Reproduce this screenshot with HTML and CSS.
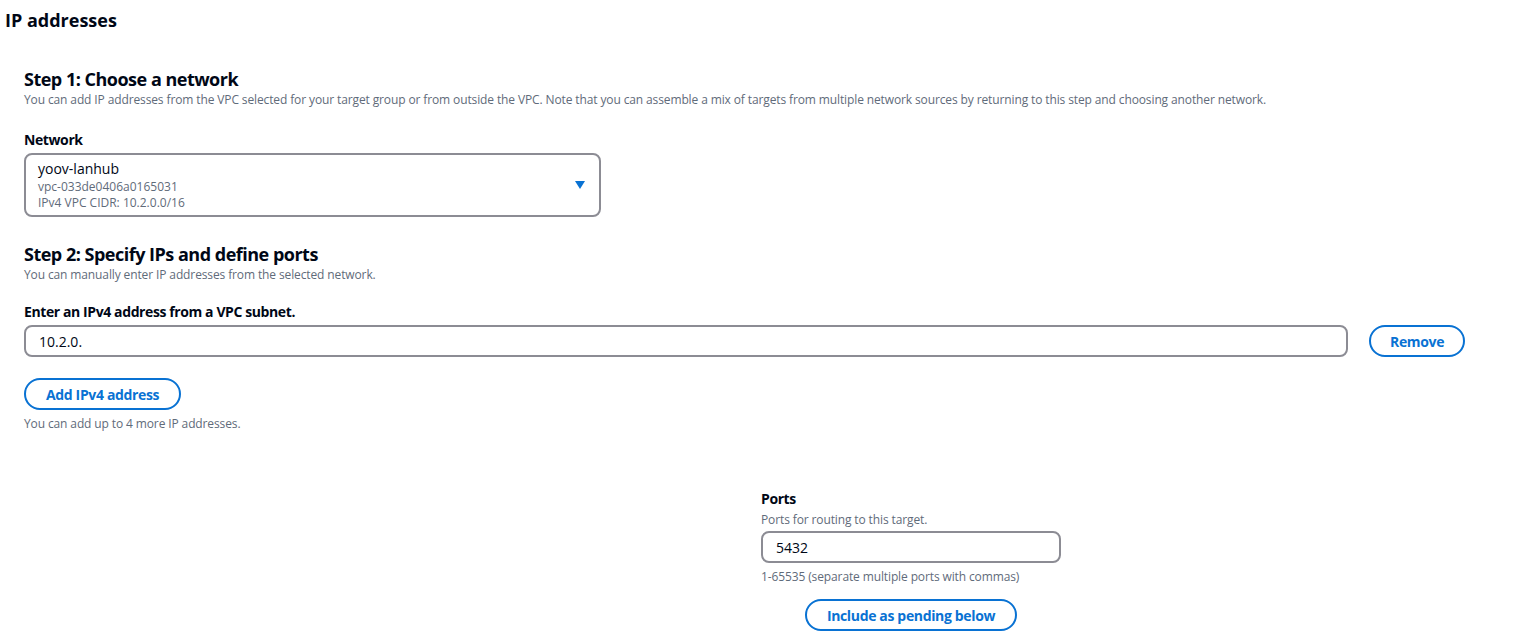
FILE: index.html
```html
<!DOCTYPE html>
<html lang="en">
<head>
    <meta charset="UTF-8">
    <meta name="viewport" content="width=device-width, initial-scale=1.0">
    <title>IP addresses</title>
    <link rel="stylesheet" href="styles.css">
</head>
<body>
    <h2 class="page-title">IP addresses</h2>

    <div class="container">
        <div class="step">
            <h3>Step 1: Choose a network</h3>
            <p class="desc">You can add IP addresses from the VPC selected for your target group or from outside the VPC. Note that you can assemble a mix of targets from multiple network sources by returning to this step and choosing another network.</p>

            <div class="field field-network">
                <label class="label">Network</label>
                <div class="select">
                    <div class="select-text">
                        <div class="select-name">yoov-lanhub</div>
                        <div class="select-meta">vpc-033de0406a0165031</div>
                        <div class="select-meta">IPv4 VPC CIDR: 10.2.0.0/16</div>
                    </div>
                    <svg class="caret" width="10" height="8" viewBox="0 0 10 8"><path d="M0 0 L10 0 L5 8 Z" fill="#0972d3"/></svg>
                </div>
            </div>
        </div>

        <div class="step">
            <h3>Step 2: Specify IPs and define ports</h3>
            <p class="desc">You can manually enter IP addresses from the selected network.</p>

            <div class="field">
                <label class="label">Enter an IPv4 address from a VPC subnet.</label>
                <div class="ip-row">
                    <input class="input" type="text" value="10.2.0.">
                    <button class="btn btn-remove">Remove</button>
                </div>
            </div>

            <button class="btn">Add IPv4 address</button>
            <p class="hint">You can add up to 4 more IP addresses.</p>

            <div class="ports-grid">
                <div></div>
                <div class="ports">
                    <label class="label">Ports</label>
                    <p class="desc">Ports for routing to this target.</p>
                    <input class="input" type="text" value="5432">
                    <p class="hint">1-65535 (separate multiple ports with commas)</p>
                    <div class="center">
                        <button class="btn">Include as pending below</button>
                    </div>
                </div>
            </div>
        </div>
    </div>
</body>
</html>
```

FILE: styles.css
```css
body {
    font-family: 'Open Sans', 'Noto Sans', Arial, sans-serif;
    margin: 0;
    padding: 0;
    background: #ffffff;
    color: #000716;
}

.page-title {
    font-size: 18px;
    font-weight: 700;
    margin: 0;
    padding: 8px 5px 0 5px;
    line-height: 24px;
}

.container {
    padding: 35px 24px 0 24px;
}

.step h3 {
    font-size: 18px;
    font-weight: 700;
    margin: 0 0 1px 0;
    line-height: 24px;
    letter-spacing: -0.5px;
}

.desc {
    font-size: 12px;
    color: #5f6b7a;
    margin: 0;
    line-height: 16px;
    letter-spacing: -0.12px;
}

.field {
    margin-top: 20px;
}

.field-network {
    margin-top: 23px;
}

.label {
    display: block;
    font-size: 14px;
    font-weight: 700;
    line-height: 18px;
    margin-bottom: 4px;
    letter-spacing: -0.4px;
}

.select {
    width: 577px;
    box-sizing: border-box;
    border: 2px solid #8c8c94;
    border-radius: 8px;
    padding: 4px 14px 4px 12px;
    display: flex;
    align-items: center;
    justify-content: space-between;
    margin-bottom: 25px;
}

.select-name {
    font-size: 14px;
    line-height: 20px;
}

.select-meta {
    font-size: 12px;
    color: #5f6b7a;
    line-height: 16px;
}

.ip-row {
    display: flex;
    align-items: center;
    gap: 21px;
    margin-bottom: 21px;
}

.ip-row .input {
    width: 1324px;
}

.input {
    box-sizing: border-box;
    height: 32px;
    border: 2px solid #8c8c94;
    border-radius: 8px;
    padding: 4px 13px;
    font-family: inherit;
    font-size: 14px;
    color: #000716;
    outline: none;
}

.btn {
    box-sizing: border-box;
    height: 32px;
    border: 2px solid #0972d3;
    border-radius: 20px;
    background: #ffffff;
    color: #0972d3;
    font-family: inherit;
    font-size: 14px;
    font-weight: 700;
    letter-spacing: -0.35px;
    padding: 0 20px;
    cursor: pointer;
}

.btn-remove {
    padding: 0 19px;
}

.hint {
    font-size: 12px;
    color: #5f6b7a;
    margin: 6px 0 0 0;
    line-height: 16px;
    letter-spacing: -0.12px;
}

.ports-grid {
    display: grid;
    grid-template-columns: 737px 300px;
    margin-top: 58px;
}

.ports .label {
    margin-bottom: 4px;
}

.ports .input {
    width: 300px;
    margin-top: 3px;
}

.center {
    display: flex;
    justify-content: center;
    margin-top: 14px;
}
```
